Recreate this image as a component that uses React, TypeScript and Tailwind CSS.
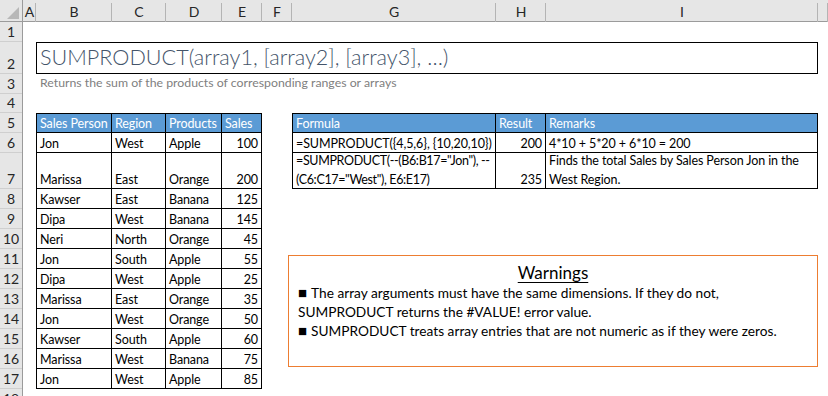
import React from 'react'

const cols = ['A', 'B', 'C', 'D', 'E', 'F', 'G', 'H', 'I', '']
const rowNums = Array.from({ length: 18 }, (_, i) => i + 1)

const sales = [
  ['Jon', 'West', 'Apple', '100'],
  ['Marissa', 'East', 'Orange', '200'],
  ['Kawser', 'East', 'Banana', '125'],
  ['Dipa', 'West', 'Banana', '145'],
  ['Neri', 'North', 'Orange', '45'],
  ['Jon', 'South', 'Apple', '55'],
  ['Dipa', 'West', 'Apple', '25'],
  ['Marissa', 'East', 'Orange', '35'],
  ['Jon', 'West', 'Orange', '50'],
  ['Kawser', 'South', 'Apple', '60'],
  ['Marissa', 'West', 'Banana', '75'],
  ['Jon', 'West', 'Apple', '85'],
]

function Cell({
  children,
  first,
  top,
  right,
  head,
}: {
  children?: React.ReactNode
  first?: boolean
  top?: boolean
  right?: boolean
  head?: boolean
}) {
  return (
    <div
      className={[
        'flex items-end px-[3px] border-r border-b border-black leading-[16px] whitespace-nowrap overflow-hidden',
        first ? 'border-l' : '',
        top ? 'border-t' : '',
        right ? 'justify-end' : '',
        head ? 'bg-[#5b9bd5] text-white' : 'text-black',
      ].join(' ')}
    >
      {children}
    </div>
  )
}

function Bullet() {
  return <span className="text-[15px] leading-none mr-[4px]">■</span>
}

export default function App() {
  return (
    <div className="w-[828px] h-[396px] overflow-hidden bg-white font-[Lato,sans-serif] text-[12.5px] tracking-[-0.1px]">
      <div className="grid grid-cols-[23px_13px_76px_54px_56px_40px_30px_204px_50px_272px_1fr] grid-rows-[22px_20px_32px_20px_19px_20px_20px_36px_20px_20px_20px_20px_20px_20px_20px_20px_20px_20px_20px] relative">
        {/* corner */}
        <div className="col-start-1 row-start-1 bg-[#e6e6e6] border-b border-r border-[#9b9b9b] relative">
          <svg className="absolute left-0 top-0" width="23" height="22" viewBox="0 0 23 22">
            <polygon points="7,19 19,19 19,7" fill="#b8b8b8" />
          </svg>
        </div>

        {/* column headers */}
        <div className="col-start-2 col-span-10 row-start-1 grid grid-cols-subgrid bg-[#e6e6e6] border-b border-[#9b9b9b]">
          {cols.map((c, i) => (
            <div key={i} className="relative flex items-center justify-center text-[#262626] text-[14px] tracking-normal pt-[1px]">
              {c}
              <span className="absolute right-0 top-[3px] bottom-0 w-px bg-[#b4b4b4]" />
            </div>
          ))}
        </div>

        {/* row headers */}
        <div className="col-start-1 row-start-2 row-span-18 grid grid-rows-subgrid bg-[#e6e6e6] border-r border-[#9b9b9b]">
          {rowNums.map((n) => (
            <div key={n} className="flex items-end justify-center pb-[1px] border-b border-[#cfcfcf] text-[#262626] text-[14px] tracking-normal leading-[17px]">
              {n}
            </div>
          ))}
        </div>

        {/* title */}
        <div className="col-start-3 col-span-8 row-start-3 border border-black flex items-end px-[3px] pb-[2px]">
          <span className="text-[21.6px] font-light text-[#44546a] leading-[28px] tracking-normal whitespace-nowrap">
            SUMPRODUCT(array1, [array2], [array3], …)
          </span>
        </div>
        <div className="col-start-3 col-span-8 row-start-4 flex items-end px-[4px] pb-[2px]">
          <span className="text-[12.3px] text-[#808080] tracking-normal whitespace-nowrap">
            Returns the sum of the products of corresponding ranges or arrays
          </span>
        </div>

        {/* sales table */}
        <div className="col-start-3 col-span-4 row-start-6 row-span-13 grid grid-cols-subgrid grid-rows-subgrid">
          <Cell head first top>Sales Person</Cell>
          <Cell head top>Region</Cell>
          <Cell head top>Products</Cell>
          <Cell head top>Sales</Cell>
          {sales.map((r, i) => (
            <React.Fragment key={i}>
              <Cell first>{r[0]}</Cell>
              <Cell>{r[1]}</Cell>
              <Cell>{r[2]}</Cell>
              <Cell right>{r[3]}</Cell>
            </React.Fragment>
          ))}
        </div>

        {/* formula table */}
        <div className="col-start-8 col-span-3 row-start-6 row-span-3 grid grid-cols-subgrid grid-rows-subgrid">
          <Cell head first top>Formula</Cell>
          <Cell head top>Result</Cell>
          <Cell head top>Remarks</Cell>
          <Cell first>=SUMPRODUCT({'{'}4,5,6{'}'}, {'{'}10,20,10{'}'})</Cell>
          <Cell right>200</Cell>
          <Cell>4*10 + 5*20 + 6*10 = 200</Cell>
          <Cell first>
            <span className="leading-[19px] -mb-[1px] tracking-[-0.35px]">
              =SUMPRODUCT(--(B6:B17="Jon"), --
              <br />
              (C6:C17="West"), E6:E17)
            </span>
          </Cell>
          <Cell right>235</Cell>
          <Cell>
            <span className="leading-[19px] -mb-[1px]">
              Finds the total Sales by Sales Person Jon in the
              <br />
              West Region.
            </span>
          </Cell>
        </div>

        {/* warnings text box */}
        <div className="absolute left-[288px] top-[255px] w-[530px] h-[112px] border border-[#ed7d31] bg-white px-[9px] pt-[6px] text-black tracking-normal">
          <div className="text-center text-[17px] leading-[21px]">
            <span className="underline underline-offset-[3px]">Warnings</span>
          </div>
          <div className="text-[13.7px] leading-[19px]">
            <div><Bullet />The array arguments must have the same dimensions. If they do not,</div>
            <div>SUMPRODUCT returns the #VALUE! error value.</div>
            <div><Bullet />SUMPRODUCT treats array entries that are not numeric as if they were zeros.</div>
          </div>
        </div>
      </div>
    </div>
  )
}
